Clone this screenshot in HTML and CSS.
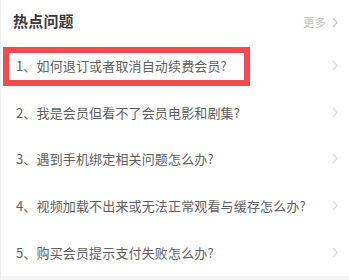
FILE: index.html
```html
<!DOCTYPE html>
<html lang="zh">
<head>
<meta charset="utf-8">
<link rel="stylesheet" href="styles.css">
</head>
<body>
<div class="page">
  <div class="panel">
    <div class="header">
      <div class="title">热点问题</div>
      <div class="more">更多<svg class="chev" viewBox="0 0 6 11" width="6" height="11"><path d="M1 1 L5 5.5 L1 10" fill="none" stroke="#c8c8c8" stroke-width="1.2"/></svg></div>
    </div>
    <ul class="list">
      <li class="row"><span class="q hl">1、如何退订或者取消自动续费会员?</span><svg class="chev" viewBox="0 0 6 11" width="6" height="11"><path d="M1 1 L5 5.5 L1 10" fill="none" stroke="#dcdcdc" stroke-width="1.2"/></svg></li>
      <li class="row"><span class="q">2、我是会员但看不了会员电影和剧集?</span><svg class="chev" viewBox="0 0 6 11" width="6" height="11"><path d="M1 1 L5 5.5 L1 10" fill="none" stroke="#dcdcdc" stroke-width="1.2"/></svg></li>
      <li class="row"><span class="q">3、遇到手机绑定相关问题怎么办?</span><svg class="chev" viewBox="0 0 6 11" width="6" height="11"><path d="M1 1 L5 5.5 L1 10" fill="none" stroke="#dcdcdc" stroke-width="1.2"/></svg></li>
      <li class="row"><span class="q">4、视频加载不出来或无法正常观看与缓存怎么办?</span><svg class="chev" viewBox="0 0 6 11" width="6" height="11"><path d="M1 1 L5 5.5 L1 10" fill="none" stroke="#dcdcdc" stroke-width="1.2"/></svg></li>
      <li class="row"><span class="q">5、购买会员提示支付失败怎么办?</span><svg class="chev" viewBox="0 0 6 11" width="6" height="11"><path d="M1 1 L5 5.5 L1 10" fill="none" stroke="#dcdcdc" stroke-width="1.2"/></svg></li>
    </ul>
  </div>
  <div class="foot"></div>
</div>
</body>
</html>
```
FILE: styles.css
```css
html, body {
  margin: 0;
  padding: 0;
  background: #ffffff;
}
body {
  font-family: "Noto Sans CJK SC", "Noto Sans", sans-serif;
  width: 349px;
  height: 280px;
  overflow: hidden;
}
.page {
  height: 280px;
  display: flex;
  flex-direction: column;
  border-left: 1px solid #efefef;
  box-sizing: border-box;
}
.panel {
  flex: none;
  height: 276px;
  background: #fff;
}
.foot {
  flex: 1;
  background: #f5f5f5;
}
.header {
  height: 42px;
  display: flex;
  align-items: center;
  justify-content: space-between;
  padding: 0 11px 0 12px;
  box-sizing: border-box;
}
.title {
  font-size: 15px;
  font-weight: bold;
  color: #3a3a3a;
  letter-spacing: 0.2px;
  margin-top: -2px;
}
.more {
  display: flex;
  align-items: center;
  gap: 6px;
  font-size: 11.5px;
  color: #c0c0c0;
  margin-top: 2px;
}
.list {
  list-style: none;
  margin: 0;
  padding: 0;
}
.row {
  height: 46.7px;
  display: flex;
  align-items: center;
  justify-content: space-between;
  padding: 0 11px 0 15px;
  box-sizing: border-box;
}
.q {
  font-size: 13px;
  color: #5e5e5e;
  letter-spacing: 0.15px;
}
.hl {
  position: relative;
}
.hl::before {
  content: "";
  position: absolute;
  left: -13px;
  top: -9px;
  width: 247px;
  height: 39px;
  border: 6.5px solid #f14a4f;
  box-sizing: border-box;
}
.chev {
  display: block;
  flex: none;
}
```
